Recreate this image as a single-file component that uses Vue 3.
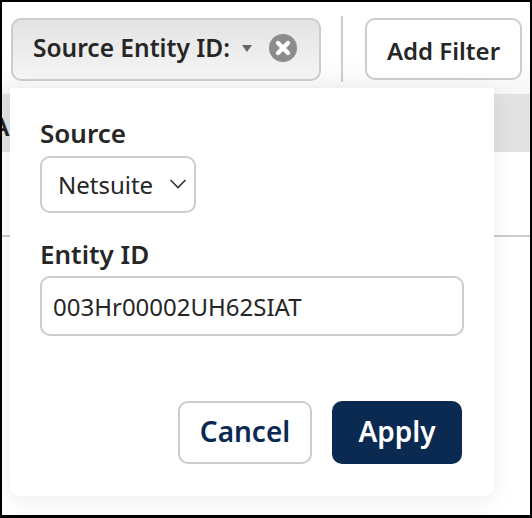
<template>
  <div class="frame">
    <div class="toolbar">
      <div class="chip">
        <span class="chip-label">Source Entity ID:</span>
        <span class="caret"></span>
        <svg class="clear" viewBox="0 0 28 28" width="28" height="28">
          <circle cx="14" cy="14" r="14" fill="#8c8c8c" />
          <path d="M9 9l10 10M19 9L9 19" stroke="#fff" stroke-width="4.4" stroke-linecap="round" />
        </svg>
      </div>
      <div class="divider"></div>
      <button class="add-btn">Add Filter</button>
    </div>

    <!-- table behind the popover -->
    <div class="table-head">A</div>
    <div class="table-row"></div>

    <div class="popover">
      <label class="field-label">Source</label>
      <div class="select">
        <span>{{ source }}</span>
        <svg class="chevron" viewBox="0 0 18 10" width="18" height="10">
          <path d="M1.5 1l7.5 7.5L16.500 1" fill="none" stroke="#333" stroke-width="1.6" />
        </svg>
      </div>
      <label class="field-label entity-label">Entity ID</label>
      <input class="text-input" v-model="entityId" />
      <div class="actions">
        <button class="cancel-btn">Cancel</button>
        <button class="apply-btn">Apply</button>
      </div>
    </div>
  </div>
</template>

<script setup>
import { ref } from 'vue'

const source = ref('Netsuite')
const entityId = ref('003Hr00002UH62SIAT')
</script>

<style>
html, body {
  margin: 0;
  background: #000;
}
</style>

<style scoped>
.frame {
  position: relative;
  box-sizing: border-box;
  width: 532px;
  height: 518px;
  border: solid #000;
  border-width: 2px 2px 3px 2px;
  background: #fff;
  overflow: hidden;
  font-family: 'Noto Sans', sans-serif;
  color: #262626;
}

.toolbar {
  display: flex;
  align-items: flex-start;
  height: 92px;
  padding: 16px 0 0 9px;
  box-sizing: border-box;
  background: linear-gradient(180deg, #fff 60%, #f6f6f6);
}

.chip {
  box-sizing: border-box;
  display: flex;
  align-items: center;
  flex: none;
  width: 310px;
  height: 63px;
  padding: 0 10px 4px 20px;
  border: 2px solid #ccc;
  border-radius: 10px;
  background: linear-gradient(180deg, #e3e3e3, #f5f5f5);
}

.chip-label {
  font-size: 24.5px;
  font-weight: 600;
  white-space: nowrap;
}

.caret {
  flex: none;
  width: 0;
  height: 0;
  margin: 2px 17px 0 12px;
  border-left: 5px solid transparent;
  border-right: 5px solid transparent;
  border-top: 7px solid #666;
}

.clear {
  flex: none;
}

.divider {
  flex: none;
  width: 2px;
  height: 66px;
  margin: -2px 22px 0 20px;
  background: #ccc;
}

.add-btn {
  flex: none;
  box-sizing: border-box;
  width: 157px;
  height: 62px;
  padding: 2px 0 0;
  border: 2px solid #ccc;
  border-radius: 10px;
  background: #fff;
  color: #262626;
  font-family: inherit;
  font-size: 24px;
  font-weight: 600;
}

.table-head {
  height: 58px;
  line-height: 64px;
  margin-left: -10px;
  background: #e2e2e2;
  font-size: 26px;
  font-weight: 600;
}

.table-row {
  height: 83px;
  border-bottom: 2px solid #ccc;
}

.popover {
  position: absolute;
  left: 8px;
  top: 86px;
  box-sizing: border-box;
  width: 484px;
  height: 408px;
  padding: 29px 30px 0;
  display: flex;
  flex-direction: column;
  align-items: flex-start;
  background: #fff;
  border-radius: 0 0 10px 10px;
  box-shadow: 0 4px 24px rgba(0, 0, 0, 0.08);
}

.field-label {
  font-size: 26px;
  line-height: 32px;
  font-weight: 600;
}

.select {
  box-sizing: border-box;
  display: flex;
  align-items: center;
  justify-content: space-between;
  width: 156px;
  height: 57px;
  margin-top: 7px;
  padding: 0 7px 0 16px;
  border: 2px solid #ccc;
  border-radius: 10px;
  font-size: 24px;
}

.chevron {
  margin-bottom: 2px;
}

.entity-label {
  margin-top: 25px;
}

.text-input {
  box-sizing: border-box;
  width: 424px;
  height: 60px;
  margin-top: 6px;
  padding: 0 11px;
  border: 2px solid #ccc;
  border-radius: 10px;
  outline: none;
  color: #262626;
  font-family: inherit;
  font-size: 24px;
}

.actions {
  display: flex;
  gap: 20px;
  align-self: flex-end;
  margin-top: 65px;
  margin-right: 2px;
}

.cancel-btn,
.apply-btn {
  box-sizing: border-box;
  height: 63px;
  padding: 0 0 3px;
  border-radius: 10px;
  font-family: inherit;
  font-size: 28px;
  font-weight: 600;
}

.cancel-btn {
  width: 134px;
  border: 2px solid #ccc;
  background: #fff;
  color: #0a2a52;
}

.apply-btn {
  width: 130px;
  border: none;
  background: #0a2a52;
  color: #fff;
}
</style>
